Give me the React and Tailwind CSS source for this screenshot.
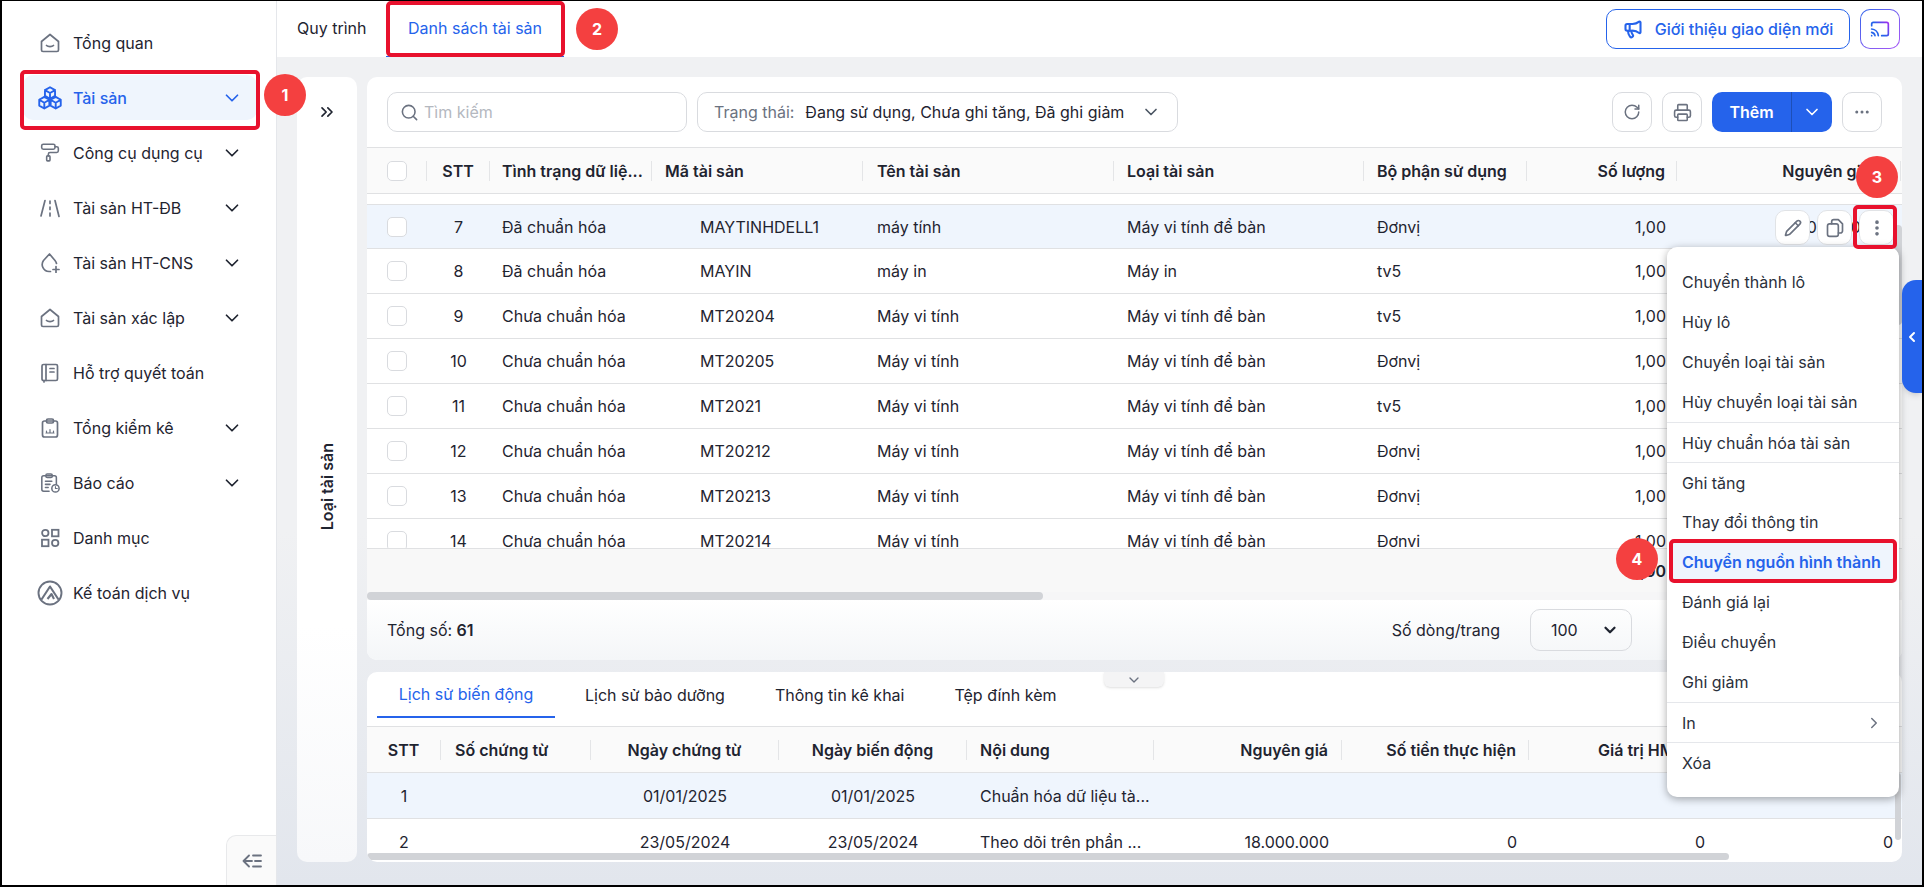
import React from "react";
import { PaintRoller, ChevronDown, ChevronRight, ChevronLeft, ChevronsRight, Search, RotateCw, Printer, Ellipsis, EllipsisVertical, Pencil, Megaphone } from "lucide-react";

const Home = () => (
  <svg width="20" height="20" viewBox="0 0 20 20" fill="none" stroke="currentColor" strokeWidth="1.7" strokeLinejoin="round" strokeLinecap="round">
    <path d="M1.500 8.500 10 1.500l8.500 7V17a1.500 1.500 0 0 1-1.500 1.500H3A1.500 1.500 0 0 1 1.500 17z" />
    <path d="M6.500 12.500c1.500 1.400 5.500 1.400 7 0" />
  </svg>
);
const cube = (cx, cy, r) => {
  const w = 0.87 * r;
  const h = 0.5 * r;
  return `M${cx} ${cy - r}L${cx + w} ${cy - h}V${cy + h}L${cx} ${cy + r}L${cx - w} ${cy + h}V${cy - h}Z M${cx - w} ${cy - h}L${cx} ${cy}L${cx + w} ${cy - h} M${cx} ${cy}V${cy + r}`;
};
const Cubes = () => (
  <svg width="24" height="24" viewBox="0 0 24 24" fill="none" stroke="currentColor" strokeWidth="1.900" strokeLinejoin="round" strokeLinecap="round" className="shrink-0">
    <path d={cube(12, 7, 5.800)} />
    <path d={cube(6.300, 16.700, 5.800)} />
    <path d={cube(17.700, 16.700, 5.800)} />
  </svg>
);
const Road = () => (
  <svg width="20" height="20" viewBox="0 0 20 20" fill="none" stroke="currentColor" strokeWidth="1.700" strokeLinecap="round">
    <path d="M5 2.500 1 18M15 2.500l4 16" />
    <path d="M10 3v2.500M10 9v2.500M10 15v3" />
  </svg>
);
const DropPlus = () => (
  <svg width="20" height="20" viewBox="0 0 20 20" fill="none" stroke="currentColor" strokeWidth="1.700" strokeLinecap="round" strokeLinejoin="round">
    <path d="M10.500 18.500H9a7 7 0 0 1-5.500-11L9.500 1l5.500 6.500c.8 1 1.300 2 1.500 3" />
    <path d="M16 13.500v6M13 16.500h6" />
  </svg>
);
const Book = () => (
  <svg width="20" height="20" viewBox="0 0 20 20" fill="none" stroke="currentColor" strokeWidth="1.700" strokeLinecap="round" strokeLinejoin="round">
    <rect x="2" y="1.500" width="15.500" height="16" rx="1.500" />
    <path d="M6 1.500v16M4 17.500v1.500M10 5.500h4M10 9h4" />
  </svg>
);
const ClipChart = () => (
  <svg width="20" height="20" viewBox="0 0 20 20" fill="none" stroke="currentColor" strokeWidth="1.700" strokeLinecap="round" strokeLinejoin="round">
    <rect x="2.500" y="3" width="15" height="16" rx="2" />
    <rect x="6.500" y="1" width="7" height="4" rx="1.500" />
    <path d="M6.500 14.500v-1.500M10 14.500v-3M13.500 14.500v-1.500M6 15h8" strokeWidth="1.200" />
  </svg>
);
const ClipClock = () => (
  <svg width="22" height="22" viewBox="0 0 22 22" fill="none" stroke="currentColor" strokeWidth="1.700" strokeLinecap="round" strokeLinejoin="round">
    <path d="M10 20H4a2 2 0 0 1-2-2V5a2 2 0 0 1 2-2h12a2 2 0 0 1 2 2v7" />
    <rect x="6.500" y="1" width="7" height="4" rx="1.500" />
    <path d="M6 9h7M6 12.500h5M6 16h3" />
    <circle cx="17" cy="17" r="4" />
    <path d="M17 15v2h2" strokeWidth="1.200" />
  </svg>
);
const Grid = () => (
  <svg width="20" height="20" viewBox="0 0 20 20" fill="none" stroke="currentColor" strokeWidth="1.800">
    <circle cx="5.300" cy="5" r="3.200" />
    <rect x="12" y="1.800" width="6.500" height="6.500" />
    <rect x="2" y="11.700" width="6.500" height="6.500" />
    <circle cx="15.200" cy="15" r="3.200" />
  </svg>
);
const Logo = () => (
  <svg width="26" height="26" viewBox="0 0 26 26" fill="none" stroke="currentColor" className="shrink-0">
    <circle cx="13" cy="13" r="11.500" strokeWidth="1.900" />
    <path d="M4.500 19.500 13 6.500 21.500 19.500M10.500 19l4-5 2.500 5" strokeWidth="2.100" strokeLinejoin="round" />
  </svg>
);
const Collapse = () => (
  <svg width="20" height="14" viewBox="0 0 20 14" fill="none" stroke="currentColor" strokeWidth="1.800" strokeLinecap="round" strokeLinejoin="round">
    <path d="M7 1.500 1.500 7 7 12.500M1.500 7H10M11 1.500h8M13 7h6M11 12.500h8" />
  </svg>
);
const CopyDoc = () => (
  <svg width="20" height="20" viewBox="0 0 24 24" fill="none" stroke="currentColor" strokeWidth="2" strokeLinecap="round" strokeLinejoin="round">
    <rect x="3" y="7" width="13" height="15" rx="2.500" />
    <path d="M8 7V4.500A2.500 2.500 0 0 1 10.500 2H16l5 5v8.500a2.500 2.500 0 0 1-2.500 2.500H16" />
  </svg>
);
const CastIcon = () => (
  <svg width="20" height="20" viewBox="0 0 24 24" fill="none" stroke="url(#castg)" strokeWidth="2" strokeLinecap="round" strokeLinejoin="round">
    <defs>
      <linearGradient id="castg" gradientUnits="userSpaceOnUse" x1="2" y1="20" x2="22" y2="4">
        <stop offset="0.45" stopColor="#2563eb" />
        <stop offset="1" stopColor="#a02df0" />
      </linearGradient>
    </defs>
    <path d="M2 8V6a2 2 0 0 1 2-2h16a2 2 0 0 1 2 2v12a2 2 0 0 1-2 2h-6" />
    <path d="M2 12a9 9 0 0 1 8 8M2 16a5 5 0 0 1 4 4M2 20h.01" />
  </svg>
);

const nav = [
  ["Tổng quan", Home, false],
  ["Tài sản", Cubes, true, true],
  ["Công cụ dụng cụ", PaintRoller, true],
  ["Tài sản HT-ĐB", Road, true],
  ["Tài sản HT-CNS", DropPlus, true],
  ["Tài sản xác lập", Home, true],
  ["Hỗ trợ quyết toán", Book, false],
  ["Tổng kiểm kê", ClipChart, true],
  ["Báo cáo", ClipClock, true],
  ["Danh mục", Grid, false],
  ["Kế toán dịch vụ", Logo, false],
];

const rows = [
  [7, "Đã chuẩn hóa", "MAYTINHDELL1", "máy tính", "Máy vi tính để bàn", "Đơnvị"],
  [8, "Đã chuẩn hóa", "MAYIN", "máy in", "Máy in", "tv5"],
  [9, "Chưa chuẩn hóa", "MT20204", "Máy vi tính", "Máy vi tính để bàn", "tv5"],
  [10, "Chưa chuẩn hóa", "MT20205", "Máy vi tính", "Máy vi tính để bàn", "Đơnvị"],
  [11, "Chưa chuẩn hóa", "MT2021", "Máy vi tính", "Máy vi tính để bàn", "tv5"],
  [12, "Chưa chuẩn hóa", "MT20212", "Máy vi tính", "Máy vi tính để bàn", "Đơnvị"],
  [13, "Chưa chuẩn hóa", "MT20213", "Máy vi tính", "Máy vi tính để bàn", "Đơnvị"],
  [14, "Chưa chuẩn hóa", "MT20214", "Máy vi tính", "Máy vi tính để bàn", "Đơnvị"],
];

const mainCols = "grid grid-cols-[60px_63px_162px_211px_251px_250px_163px_150px_224px] items-center";
const subCols = "grid grid-cols-[74px_150px_188px_188px_187px_188px_187px_188px_188px] items-center";

const H = ({ children, className = "" }) => (
  <div className={"h-5 flex items-center border-r border-[#e4e5e7] whitespace-nowrap overflow-hidden " + className}>{children}</div>
);

const Check = () => <div className="w-5 h-5 rounded-[5px] border border-[#d9dbdf] bg-white" />;

const IconBtn = ({ children }) => (
  <div className="w-10 h-10 rounded-[10px] border border-[#d9dbdf] bg-white flex items-center justify-center text-[#6b7280]">{children}</div>
);

const RowBtn = ({ children }) => (
  <div className="w-[35px] h-[35px] rounded-[10px] border border-[#e1e3e6] bg-white flex items-center justify-center text-[#6b7280]">{children}</div>
);

const Badge = ({ n, className }) => (
  <div className={"absolute w-[42px] h-[42px] rounded-full bg-[#f44040] text-white font-bold text-[16px] flex items-center justify-center " + className}>{n}</div>
);

const menu = [
  ["Chuyển thành lô"],
  ["Hủy lô"],
  ["Chuyển loại tài sản"],
  ["Hủy chuyển loại tài sản"],
  ["Hủy chuẩn hóa tài sản", "d"],
  ["Ghi tăng", "d"],
  ["Thay đổi thông tin"],
  ["Chuyển nguồn hình thành", "a"],
  ["Đánh giá lại"],
  ["Điều chuyển"],
  ["Ghi giảm"],
  ["In", "d", true],
  ["Xóa", "d"],
];

export default function App() {
  return (
    <div className="relative w-[1924px] h-[887px] overflow-hidden bg-black pt-px pb-0.5 px-0.5 font-['Inter','Noto_Sans',sans-serif] text-[16px] text-[#1f2430]">
      <div className="flex h-full bg-gradient-to-b from-[#f0f1f3] from-60% to-[#e2e6ed]">
        <aside className="relative w-[275px] shrink-0 bg-white border-r border-[#e5e7eb] pt-[19px] pl-[21px] pr-[19px] flex flex-col gap-[10px]">
          {nav.map(([label, Icon, chev, active]) => (
            <div key={label} className={"h-[45px] rounded-[10px] pl-[17px] pr-[14px] flex items-center " + (active ? "bg-[#eff5fd] text-[#2563eb] font-medium" : "")}>
              <span className={"w-5 h-5 flex items-center justify-center shrink-0 " + (active ? "text-[#2563eb]" : "text-[#6b7280]")}>
                {Icon === PaintRoller ? <Icon size={21} strokeWidth={1.9} /> : <Icon />}
              </span>
              <span className="ml-[13px] flex-1 whitespace-nowrap">{label}</span>
              {chev && <ChevronDown size={22} strokeWidth={1.9} />}
            </div>
          ))}
          <div className="absolute right-0 bottom-0 w-[50px] h-[50px] bg-[#fafafa] border-l border-t border-[#e8e9eb] rounded-tl-[10px] flex items-center justify-center text-[#6b7280]">
            <Collapse />
          </div>
        </aside>

        <div className="flex-1 flex flex-col min-w-0">
          <header className="h-14 shrink-0 bg-white flex items-center pl-5 pr-[22px]">
            <div className="w-[89px] whitespace-nowrap pb-[2px]">Quy trình</div>
            <div className="w-[178px] h-full flex items-center justify-center text-[#2563eb] border-b border-[#2563eb] pb-[2px]">Danh sách tài sản</div>
            <div className="ml-auto w-[244px] h-10 rounded-[10px] border border-[#2563eb] text-[#2563eb] flex items-center justify-center gap-3">
              <Megaphone size={20} strokeWidth={2.5} />
              <span className="font-medium whitespace-nowrap">Giới thiệu giao diện mới</span>
            </div>
            <div className="ml-[10px] w-10 h-10 rounded-[10px] p-px bg-gradient-to-br from-[#2563eb] to-[#a855f7]">
              <div className="w-full h-full rounded-[9px] bg-white flex items-center justify-center">
                <CastIcon />
              </div>
            </div>
          </header>

          <main className="flex-1 flex gap-[10px] pl-5 pr-5 pt-5 pb-[23px] min-h-0">
            <div className="w-[60px] shrink-0 rounded-[10px] bg-gradient-to-b from-white from-70% to-[#f7f8fa] flex flex-col items-center">
              <div className="h-[70px] flex items-center justify-center text-[#1f2430]"><ChevronsRight size={20} /></div>
              <div className="mt-[296px] font-semibold [writing-mode:vertical-rl] rotate-180 whitespace-nowrap">Loại tài sản</div>
            </div>

            <div className="w-[1535px] flex flex-col gap-[12px] min-h-0">
              <section className="relative h-[583px] rounded-[10px] bg-white overflow-hidden flex flex-col">
                <div className="h-[71px] shrink-0 flex items-center px-5 gap-[10px] border-b border-[#e0e1e3]">
                  <div className="w-[300px] h-10 rounded-[10px] border border-[#d9dbdf] flex items-center px-3 gap-[5px] text-[#6b7280]">
                    <Search size={19} />
                    <span className="text-[#b4b8bf]">Tìm kiếm</span>
                  </div>
                  <div className="w-[481px] h-10 rounded-[10px] border border-[#d9dbdf] flex items-center px-4">
                    <span className="text-[#6b7280] whitespace-nowrap">Trạng thái:</span>
                    <span className="ml-[11px] flex-1 whitespace-nowrap">Đang sử dụng, Chưa ghi tăng, Đã ghi giảm</span>
                    <ChevronDown size={20} className="text-[#4b5563]" />
                  </div>
                  <div className="ml-auto"><IconBtn><RotateCw size={18} /></IconBtn></div>
                  <IconBtn><Printer size={19} /></IconBtn>
                  <div className="w-[120px] h-10 rounded-[10px] bg-[#2563eb] text-white flex items-center">
                    <span className="w-20 text-center font-semibold border-r border-[#1d4fb8] leading-10">Thêm</span>
                    <span className="flex-1 flex justify-center"><ChevronDown size={20} /></span>
                  </div>
                  <IconBtn><Ellipsis size={18} /></IconBtn>
                </div>

                <div className={mainCols + " h-[46px] shrink-0 bg-[#fafafa] border-b border-[#e0e1e3] font-semibold"}>
                  <H className="pl-5"><Check /></H>
                  <H className="justify-center">STT</H>
                  <H className="pl-3">Tình trạng dữ liệ...</H>
                  <H className="pl-[13px]">Mã tài sản</H>
                  <H className="pl-[14px]">Tên tài sản</H>
                  <H className="pl-[13px]">Loại tài sản</H>
                  <H className="pl-[13px]">Bộ phận sử dụng</H>
                  <H className="justify-end pr-[11px]">Số lượng</H>
                  <H className="justify-end pr-[30px]">Nguyên giá</H>
                </div>

                <div className="h-[354px] shrink-0 overflow-hidden pt-[10px]">
                  {rows.map((r, i) => (
                    <div key={r[0]} className={mainCols + " h-[45px] border-b border-[#e0e1e3] " + (i === 0 ? "bg-[#eff5fd] border-t" : "")}>
                      <div className="pl-5"><Check /></div>
                      <div className="text-center">{r[0]}</div>
                      <div className="pl-3 whitespace-nowrap">{r[1]}</div>
                      <div className="pl-12 whitespace-nowrap">{r[2]}</div>
                      <div className="pl-[14px] whitespace-nowrap">{r[3]}</div>
                      <div className="pl-[13px] whitespace-nowrap">{r[4]}</div>
                      <div className="pl-[13px]">{r[5]}</div>
                      <div className="text-right pr-[11px]">1,00</div>
                      <div className="text-right pr-[30px]">{i === 0 ? "18.000.000" : ""}</div>
                    </div>
                  ))}
                </div>

                <div className={mainCols + " h-[44px] shrink-0 bg-[#f8f8f8] border-t border-[#e0e1e3] font-semibold"}>
                  <div className="col-start-8 text-right pr-[11px]">61,00</div>
                </div>
                <div className="h-2 shrink-0 bg-[#f6f6f7]">
                  <div className="w-[676px] h-2 rounded-full bg-[#d1d3d7]" />
                </div>

                <div className="flex-1 flex items-center pl-5 pr-[270px] bg-gradient-to-b from-white to-[#f4f6f8]">
                  <span>Tổng số: <b className="font-semibold">61</b></span>
                  <span className="ml-auto">Số dòng/trang</span>
                  <div className="ml-[30px] w-[102px] h-[42px] rounded-[10px] border border-[#d9dbdf] flex items-center pl-5 pr-3 justify-between">
                    100
                    <ChevronDown size={18} strokeWidth={3} />
                  </div>
                </div>

                <div className="absolute right-0 top-[148px] w-[8px] h-[100px] rounded-full bg-[#d1d3d7]" />

                <div className="absolute left-[1408px] top-[133px] flex gap-[7px]">
                  <RowBtn><Pencil size={18} strokeWidth={2.2} /></RowBtn>
                  <RowBtn><CopyDoc /></RowBtn>
                  <RowBtn><EllipsisVertical size={20} strokeWidth={2.4} /></RowBtn>
                </div>
              </section>

              <section className="relative flex-1 min-h-0 rounded-[10px] bg-white overflow-hidden flex flex-col">
                <div className="h-[55px] shrink-0 flex items-start pl-[10px] border-b border-[#e0e1e3]">
                  <div className="w-[178px] h-[46px] flex items-center justify-center text-[#2563eb] border-b-2 border-[#2563eb] whitespace-nowrap">Lịch sử biến động</div>
                  <div className="ml-[30px] h-[46px] flex items-center whitespace-nowrap">Lịch sử bảo dưỡng</div>
                  <div className="ml-[50px] h-[46px] flex items-center whitespace-nowrap">Thông tin kê khai</div>
                  <div className="ml-[50px] h-[46px] flex items-center whitespace-nowrap">Tệp đính kèm</div>
                </div>
                <div className={subCols + " h-[46px] shrink-0 bg-[#fafafa] border-b border-[#e0e1e3] font-semibold"}>
                  <H className="justify-center">STT</H>
                  <H className="pl-[14px]">Số chứng từ</H>
                  <H className="justify-center">Ngày chứng từ</H>
                  <H className="justify-center">Ngày biến động</H>
                  <H className="pl-[13px]">Nội dung</H>
                  <H className="justify-end pr-[13px]">Nguyên giá</H>
                  <H className="justify-end pr-[12px]">Số tiền thực hiện</H>
                  <H className="pl-[69px]">Giá trị HM</H>
                  <H></H>
                </div>
                <div className="h-[80px] shrink-0 overflow-hidden">
                  <div className={subCols + " h-[46px] bg-[#eff5fd] border-b border-[#e0e1e3]"}>
                    <div className="text-center">1</div>
                    <div />
                    <div className="text-center">01/01/2025</div>
                    <div className="text-center">01/01/2025</div>
                    <div className="pl-[13px] whitespace-nowrap">Chuẩn hóa dữ liệu tà...</div>
                  </div>
                  <div className={subCols + " h-[46px]"}>
                    <div className="text-center">2</div>
                    <div />
                    <div className="text-center">23/05/2024</div>
                    <div className="text-center">23/05/2024</div>
                    <div className="pl-[13px] whitespace-nowrap">Theo dõi trên phần ...</div>
                    <div className="text-right pr-[13px]">18.000.000</div>
                    <div className="text-right pr-[12px]">0</div>
                    <div className="text-right pr-[12px]">0</div>
                    <div className="text-right pr-[12px]">0</div>
                  </div>
                </div>
                <div className="h-[7px] shrink-0">
                  <div className="w-[1362px] h-[7px] rounded-full bg-[#d1d3d7]" />
                </div>
                <div className="absolute right-[1px] top-[101px] w-[6px] h-[67px] rounded-full bg-[#d1d3d7]" />
                <div className="absolute left-[737px] top-0 w-[60px] h-[15px] rounded-b-[6px] bg-[#f4f4f5] shadow-sm flex items-center justify-center text-[#6b7280]">
                  <ChevronDown size={16} />
                </div>
              </section>
            </div>
          </main>
        </div>
      </div>

      {/* floating menu */}
      <div className="absolute left-[1667px] top-[247px] w-[232px] h-[550px] rounded-[10px] bg-white shadow-[0_2px_8px_rgba(0,0,0,0.35)] pt-[15px] flex flex-col text-[#2b303b]">
        {menu.map(([label, kind, sub]) => (
          <div key={label} className={"h-10 shrink-0 flex items-center pr-4 whitespace-nowrap " + (kind === "d" ? "border-t border-[#e5e7eb] pl-[15px]" : kind === "a" ? "bg-[#eff5fd] text-[#2563eb] font-semibold mx-[2px] pl-[13px]" : "pl-[15px]")}>
            <span className="flex-1">{label}</span>
            {sub && <ChevronRight size={18} className="text-[#6b7280]" />}
          </div>
        ))}
      </div>

      {/* blue side handle */}
      <div className="absolute right-[2px] top-[280px] w-5 h-[113px] rounded-l-[14px] bg-[#2563eb] shadow-md flex items-center justify-center text-white">
        <ChevronLeft size={16} strokeWidth={3} />
      </div>

      {/* annotation frames */}
      <div className="absolute left-[20px] top-[70px] w-[240px] h-[60px] rounded-[5px] border-[4px] border-[#e8112d]" />
      <div className="absolute left-[386px] top-[1px] w-[179px] h-[56px] rounded-[5px] border-[4px] border-[#e8112d]" />
      <div className="absolute left-[1853px] top-[205px] w-[44px] h-[44px] rounded-[5px] border-[4px] border-[#e8112d]" />
      <div className="absolute left-[1669px] top-[539px] w-[228px] h-[44px] rounded-[5px] border-[4px] border-[#e8112d]" />

      <Badge n="1" className="left-[264px] top-[74px]" />
      <Badge n="2" className="left-[576px] top-[8px]" />
      <Badge n="3" className="left-[1856px] top-[156px]" />
      <Badge n="4" className="left-[1616px] top-[538px]" />
    </div>
  );
}
